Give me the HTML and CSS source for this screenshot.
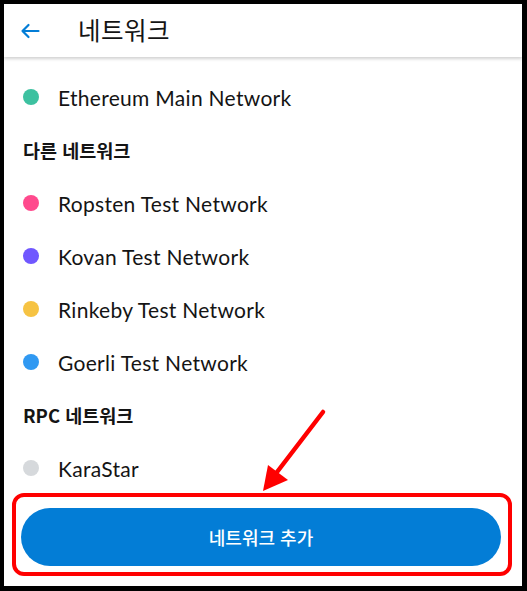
FILE: index.html
```html
<!DOCTYPE html>
<html lang="ko">
<head>
<meta charset="utf-8">
<link rel="stylesheet" href="styles.css">
</head>
<body>
<div class="frame">
  <header class="topbar">
    <svg class="back" width="20" height="16" viewBox="0 0 20 16" aria-hidden="true">
      <path d="M18.5 8H2.5M8.5 2L2.5 8L8.5 14" fill="none" stroke="#037DD6" stroke-width="2.2" stroke-linecap="round" stroke-linejoin="round"/>
    </svg>
    <h1 class="title">네트워크</h1>
  </header>
  <main class="list">
    <div class="row"><span class="dot dot-main"></span><span class="name">Ethereum Main Network</span></div>
    <div class="row section"><span class="section-label">다른 네트워크</span></div>
    <div class="row"><span class="dot dot-ropsten"></span><span class="name">Ropsten Test Network</span></div>
    <div class="row"><span class="dot dot-kovan"></span><span class="name">Kovan Test Network</span></div>
    <div class="row"><span class="dot dot-rinkeby"></span><span class="name">Rinkeby Test Network</span></div>
    <div class="row"><span class="dot dot-goerli"></span><span class="name">Goerli Test Network</span></div>
    <div class="row section"><span class="section-label">RPC 네트워크</span></div>
    <div class="row"><span class="dot dot-rpc"></span><span class="name">KaraStar</span></div>
    <div class="footer">
      <button class="add-btn">네트워크 추가</button>
    </div>
  </main>
  <div class="highlight"></div>
  <svg class="pointer" width="80" height="90" viewBox="0 0 80 90" aria-hidden="true">
    <line x1="73" y1="8" x2="24" y2="72" stroke="#FF0000" stroke-width="4.5" stroke-linecap="round"/>
    <polygon points="13,87 18,61 38,76" fill="#FF0000"/>
  </svg>
</div>
</body>
</html>
```
FILE: styles.css
```css
html, body {
  margin: 0;
  padding: 0;
  background: #000;
}
body {
  width: 527px;
  height: 591px;
  overflow: hidden;
  font-family: "Lato", "Noto Sans CJK KR", sans-serif;
  color: #111;
}
.frame {
  position: relative;
  margin: 4px 5px 0 4px;
  width: 518px;
  height: 582px;
  background: #fff;
  overflow: hidden;
}
.topbar {
  height: 53px;
  display: flex;
  align-items: center;
  box-shadow: 0 2px 3px rgba(0, 0, 0, 0.18);
  position: relative;
  z-index: 1;
}
.back {
  margin-left: 16px;
  margin-top: 1px;
}
.title {
  margin: -3px 0 0 38px;
  font-family: "Noto Sans CJK KR", sans-serif;
  font-weight: 400;
  font-size: 24.5px;
  color: #141414;
  letter-spacing: 0.5px;
}
.list {
  padding-top: 15px;
}
.row {
  height: 53px;
  display: flex;
  align-items: center;
  padding-left: 19px;
}
.dot {
  width: 16px;
  height: 16px;
  border-radius: 50%;
  margin-top: -4px;
  flex-shrink: 0;
}
.dot-main { background: #3DC1A0; }
.dot-ropsten { background: #FF4A8D; }
.dot-kovan { background: #7057FF; }
.dot-rinkeby { background: #F6C343; }
.dot-goerli { background: #3099F2; }
.dot-rpc { background: #D6D9DC; }
.name {
  margin-left: 19px;
  margin-top: -2px;
  font-size: 21px;
  letter-spacing: 0.3px;
  color: #141414;
}
.section {
  font-family: "Noto Sans CJK KR", sans-serif;
  font-weight: 700;
  font-size: 18.5px;
  color: #141414;
}
.section-label {
  margin-top: -4px;
}
.footer {
  padding: 12px 21px 0 17px;
}
.add-btn {
  display: block;
  width: 100%;
  height: 58px;
  border: none;
  border-radius: 29px;
  background: #037DD6;
  color: #fff;
  font-family: "Noto Sans CJK KR", sans-serif;
  font-size: 18px;
  font-weight: 500;
}
.highlight {
  position: absolute;
  left: 8px;
  top: 489px;
  width: 492px;
  height: 75px;
  border: 4.5px solid #FF0000;
  border-radius: 12px;
}
.pointer {
  position: absolute;
  left: 246px;
  top: 400px;
}
```
